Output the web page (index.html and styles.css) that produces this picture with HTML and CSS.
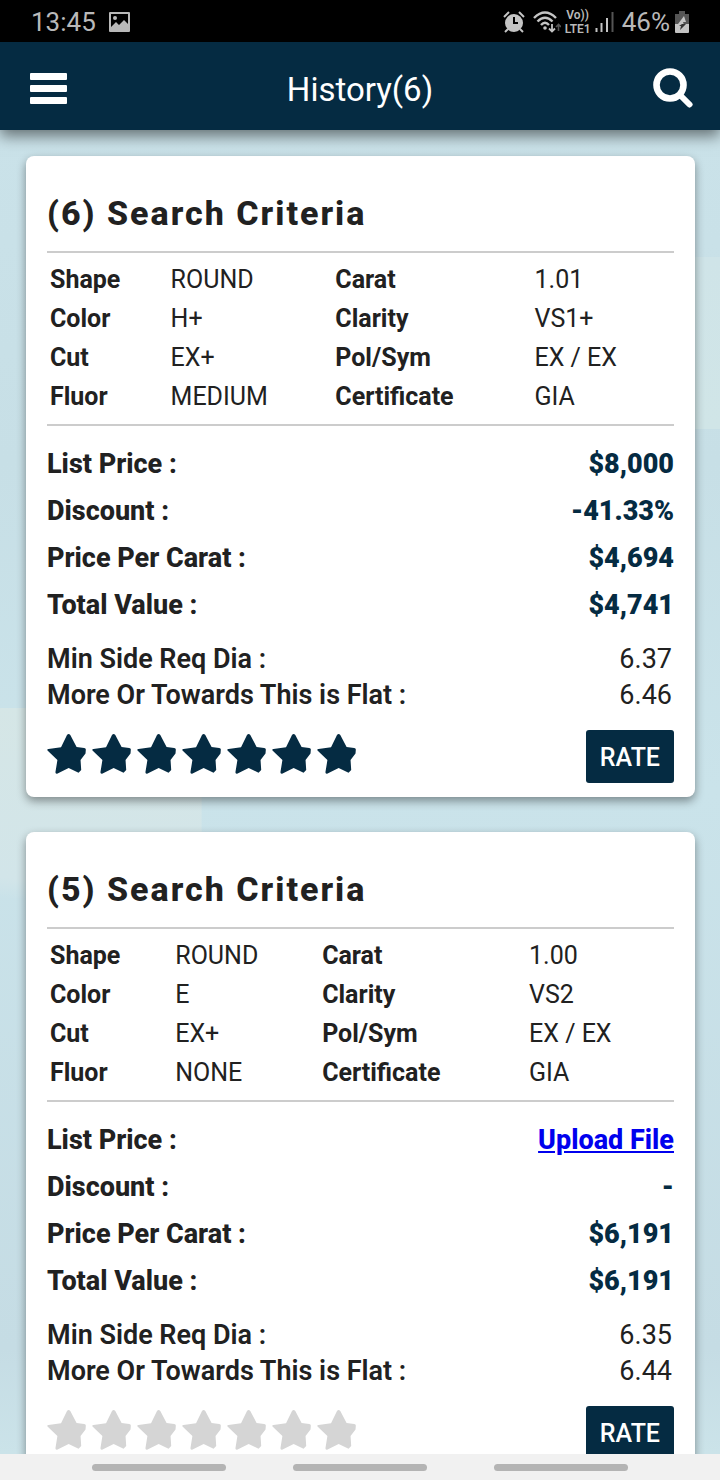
FILE: index.html
```html
<!DOCTYPE html>
<html lang="en">

<head>
    <meta charset="utf-8">
    <meta name="viewport" content="width=device-width, initial-scale=1">
    <title>History</title>
    <link rel="stylesheet" href="styles.css">
</head>

<body>
    <svg width="0" height="0" class="sprite" aria-hidden="true">
        <symbol id="star" viewBox="0 0 117 121">
            <path d="M60 3Q65-3 70 3L89 39L112 42Q117 43 117 47L116 59L101 79L103 109L95 117L65 103L30 120Q25 121 25 116L31 79L1 50Q-1 46 4 45L42 40Z" />
        </symbol>
    </svg>

    <!-- status bar -->
    <div class="status">
        <span class="status-text">13:45</span>
        <svg class="status-photo" width="21" height="20" viewBox="0 0 21 20">
            <path fill="#b9b9b9" fill-rule="evenodd" d="M1 0H20Q21 0 21 1V19Q21 20 20 20H1Q0 20 0 19V1Q0 0 1 0ZM2 2V15L7 10L10 13L15 8L19 12V2Z" />
            <circle cx="6" cy="6" r="2" fill="#b9b9b9" />
        </svg>
        <div class="status-right">
            <svg width="22" height="22" viewBox="0 0 22 22">
                <circle cx="11" cy="12" r="9" fill="#c4c4c4" />
                <path d="M1 6L6 1M21 6L16 1M5 18L2 21M17 18L20 21" stroke="#c4c4c4" stroke-width="2" />
                <path d="M11 6V12H15" fill="none" stroke="#000" stroke-width="2" />
            </svg>
            <svg width="28" height="22" viewBox="0 0 28 22">
                <g fill="none" stroke="#c4c4c4" stroke-width="2.4">
                    <path d="M1 7Q12-4 23 7" />
                    <path d="M4.500 10.500Q12 3 19.500 10.500" />
                    <path d="M8 14Q12 9.500 16 14" />
                </g>
                <circle cx="12" cy="17" r="1.800" fill="#c4c4c4" />
                <path d="M19 13V20M16 17.500L19 20.500L22 17.500" fill="none" stroke="#c4c4c4" stroke-width="1.800" />
                <path d="M25.500 20V14M23 16L25.500 13.500L28 16" fill="none" stroke="#555" stroke-width="1.600" />
            </svg>
            <span class="status-lte"><span>Vo))</span><span>LTE1</span></span>
            <svg width="19" height="22" viewBox="0 0 19 22">
                <path d="M1.500 17V21M6.500 12V21M12 7V21" stroke="#c4c4c4" stroke-width="2" />
                <path d="M17.500 1V21" stroke="#555" stroke-width="2" />
            </svg>
            <span class="status-text status-battery">46%</span>
            <svg width="14" height="22" viewBox="0 0 14 22">
                <path fill="#555" d="M4 0H10V3H14V14H0V3H4Z" />
                <path fill="#c4c4c4" d="M0 13H14V21Q14 22 13 22H1Q0 22 0 21Z" />
                <path fill="#c4c4c4" d="M9 5L3 13H7L6 14H9L8 11H11Z" />
                <path fill="#333" d="M7 13H11L5 19L6 15H4Z" />
            </svg>
        </div>
    </div>

    <header class="topbar">
        <button type="button" class="icon-button" aria-label="Menu">
            <svg width="37" height="31" viewBox="0 0 37 31" fill="#fff">
                <rect width="37" height="7" rx="1" />
                <rect y="12" width="37" height="7" rx="1" />
                <rect y="24" width="37" height="7" rx="1" />
            </svg>
        </button>
        <h1>History(6)</h1>
        <button type="button" class="icon-button" aria-label="Search">
            <svg width="40" height="40" viewBox="0 0 40 40" fill="none" stroke="#fff">
                <circle cx="17" cy="17" r="13.500" stroke-width="6.600" />
                <path d="M27 27L36.500 36.500" stroke-width="6" stroke-linecap="round" />
            </svg>
        </button>
    </header>

    <main>
        <section class="card">
            <h2>(6) Search Criteria</h2>
            <div class="criteria">
                <table>
                    <tr><th>Shape</th><td>ROUND</td><th>Carat</th><td>1.01</td></tr>
                    <tr><th>Color</th><td>H+</td><th>Clarity</th><td>VS1+</td></tr>
                    <tr><th>Cut</th><td>EX+</td><th>Pol/Sym</th><td>EX / EX</td></tr>
                    <tr><th>Fluor</th><td>MEDIUM</td><th>Certificate</th><td>GIA</td></tr>
                </table>
            </div>
            <dl class="prices">
                <div><dt>List Price :</dt><dd>$8,000</dd></div>
                <div><dt>Discount :</dt><dd>-41.33%</dd></div>
                <div><dt>Price Per Carat :</dt><dd>$4,694</dd></div>
                <div><dt>Total Value :</dt><dd>$4,741</dd></div>
            </dl>
            <dl class="sizes">
                <div><dt>Min Side Req Dia :</dt><dd>6.37</dd></div>
                <div><dt>More Or Towards This is Flat :</dt><dd>6.46</dd></div>
            </dl>
            <div class="card-footer">
                <div class="stars stars-on" role="img" aria-label="7 of 7 stars">
                    <svg><use href="#star" /></svg>
                    <svg><use href="#star" /></svg>
                    <svg><use href="#star" /></svg>
                    <svg><use href="#star" /></svg>
                    <svg><use href="#star" /></svg>
                    <svg><use href="#star" /></svg>
                    <svg><use href="#star" /></svg>
                </div>
                <button type="button" class="rate">RATE</button>
            </div>
        </section>

        <section class="card">
            <h2>(5) Search Criteria</h2>
            <div class="criteria">
                <table>
                    <tr><th>Shape</th><td>ROUND</td><th>Carat</th><td>1.00</td></tr>
                    <tr><th>Color</th><td>E</td><th>Clarity</th><td>VS2</td></tr>
                    <tr><th>Cut</th><td>EX+</td><th>Pol/Sym</th><td>EX / EX</td></tr>
                    <tr><th>Fluor</th><td>NONE</td><th>Certificate</th><td>GIA</td></tr>
                </table>
            </div>
            <dl class="prices">
                <div><dt>List Price :</dt><dd><a href="#upload">Upload File</a></dd></div>
                <div><dt>Discount :</dt><dd>-</dd></div>
                <div><dt>Price Per Carat :</dt><dd>$6,191</dd></div>
                <div><dt>Total Value :</dt><dd>$6,191</dd></div>
            </dl>
            <dl class="sizes">
                <div><dt>Min Side Req Dia :</dt><dd>6.35</dd></div>
                <div><dt>More Or Towards This is Flat :</dt><dd>6.44</dd></div>
            </dl>
            <div class="card-footer">
                <div class="stars" role="img" aria-label="0 of 7 stars">
                    <svg><use href="#star" /></svg>
                    <svg><use href="#star" /></svg>
                    <svg><use href="#star" /></svg>
                    <svg><use href="#star" /></svg>
                    <svg><use href="#star" /></svg>
                    <svg><use href="#star" /></svg>
                    <svg><use href="#star" /></svg>
                </div>
                <button type="button" class="rate">RATE</button>
            </div>
        </section>
    </main>

    <!-- gesture hints -->
    <div class="gestures">
        <span></span>
        <span></span>
        <span></span>
    </div>
</body>

</html>
```

FILE: styles.css
```css
* {
    margin: 0;
    padding: 0;
    box-sizing: border-box;
}

body {
    height: 100vh;
    display: flex;
    flex-direction: column;
    overflow: hidden;
    font-family: Roboto, "Liberation Sans", sans-serif;
    color: #212121;
    background: #c9e1e8;
}

button {
    border: 0 none;
    font-family: inherit;
    cursor: pointer;
}

svg {
    display: block;
}

.sprite {
    position: absolute;
}

/*status bar*/

.status {
    flex: none;
    height: 42px;
    padding: 2px 31px 0;
    display: flex;
    align-items: center;
    background: #000;
    color: #b9b9b9;
}

.status-text {
    font-size: 26px;
    line-height: 40px;
}

.status-photo {
    margin-left: 13px;
}

.status-right {
    margin-left: auto;
    display: flex;
    align-items: center;
    gap: 8px;
}

.status-lte {
    display: flex;
    flex-direction: column;
    align-items: center;
    margin: 0 -4px;
    font-size: 12px;
    line-height: 14px;
    font-weight: 600;
}

.status-battery {
    margin: 0 -3px 0 0;
}

/*top bar*/

.topbar {
    position: relative;
    flex: none;
    height: 88px;
    padding: 4px 27px 0 30px;
    display: flex;
    align-items: center;
    justify-content: space-between;
    background: #052b42;
    color: #fff;
    box-shadow: 0 6px 14px rgba(0, 0, 0, 0.5);
    z-index: 1;
}

.topbar h1 {
    padding-top: 3px;
    font-size: 33px;
    font-weight: 400;
}

.icon-button {
    background: none;
}

/*cards*/

main {
    flex: 1;
    min-height: 0;
    overflow: hidden;
    padding: 26px 25px 26px 26px;
    /*pale facets on the left and right edges*/
    background:
        linear-gradient(185deg, transparent 4%, #d5e6e6 6%, #d2e5e9 90%, transparent) 0 51% / 28% 190px no-repeat,
        linear-gradient(#cfe4e8, #d0e5e7) 100% 11% / 25% 172px no-repeat,
        linear-gradient(#cae2e9, #c7dfe6 25%, #cae3ea 50%, #c5dce4 92%, #cbe3e9);
}

.card {
    margin-bottom: 35px;
    padding: 36px 21px 14px;
    background: #fff;
    border-radius: 8px;
    box-shadow: 0 4px 10px rgba(0, 0, 0, 0.4);
}

.card h2 {
    font-size: 34px;
    line-height: 43px;
    font-weight: 800;
    letter-spacing: 2px;
    margin-bottom: 16px;
}

.criteria {
    border-top: 2px solid #ccc;
    border-bottom: 2px solid #ccc;
    padding: 6px 0 7px;
}

.criteria table {
    width: 100%;
    border-spacing: 2px;
    font-size: 25px;
    line-height: 35px;
}

.criteria th,
.criteria td {
    padding: 1px;
    text-align: left;
    white-space: nowrap;
}

.prices {
    margin: 15px 0 12px;
    font-size: 27px;
    line-height: 47px;
    font-weight: 800;
}

.prices div,
.sizes div {
    display: flex;
    justify-content: space-between;
}

.prices dd {
    color: #052b42;
    font-weight: 900;
}

.prices a {
    color: #0000ee;
    font-weight: 800;
}

.sizes {
    font-size: 27px;
    line-height: 36px;
}

.sizes dt {
    font-weight: 600;
}

.sizes dd {
    padding-right: 2px;
}

/*rating*/

.card-footer {
    margin-top: 17px;
    display: flex;
    align-items: flex-start;
    justify-content: space-between;
}

.stars {
    display: flex;
    gap: 6px;
    padding-top: 4px;
    fill: #d5d5d5;
}

.stars-on {
    fill: #052b42;
}

.stars svg {
    width: 39px;
    height: 40px;
}

.rate {
    height: 53px;
    padding: 1px 14px 0;
    background: #052b42;
    border-radius: 3px;
    color: #fff;
    font-size: 25px;
    font-weight: 500;
}

/*gesture hints*/

.gestures {
    flex: none;
    height: 26px;
    display: flex;
    align-items: center;
    justify-content: center;
    gap: 67px;
    background: #f1f1f1;
}

.gestures span {
    width: 134px;
    height: 7px;
    border-radius: 4px;
    background: #b4b4b4;
}
```
